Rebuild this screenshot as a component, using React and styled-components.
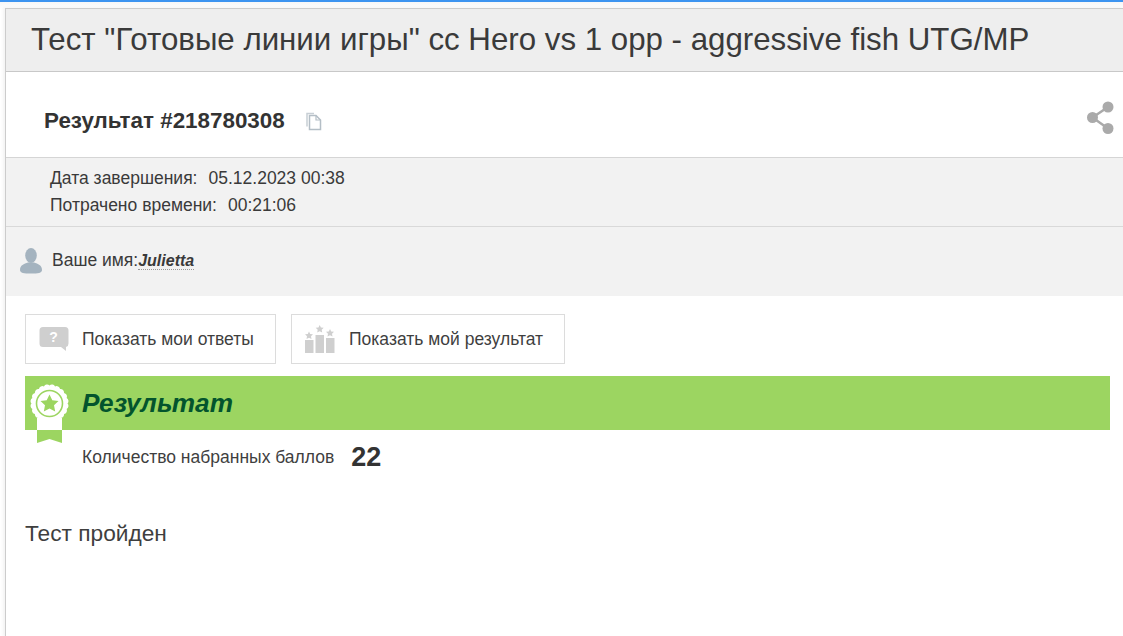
import React from 'react';
import styled, { createGlobalStyle } from 'styled-components';

const GlobalStyle = createGlobalStyle`
    html, body {
        margin: 0;
        padding: 0;
        height: 100%;
        background: #fff;
        overflow: hidden;
    }
    body {
        font-family: "Liberation Sans", Arial, sans-serif;
        color: #333;
    }
`;

const Page = styled.div`
    height: 636px;
    border-top: 2px solid #3d94f0;
    padding: 6px 0 0 5px;
    box-sizing: border-box;
    background: linear-gradient(#f7f7f7, #fff 8px);
`;

const Panel = styled.div`
    height: 100%;
    background: #fff;
    border-left: 1px solid #ccc;
    border-top: 1px solid #ccc;
    box-shadow: -2px 0 3px rgba(0, 0, 0, 0.05);
`;

const TitleBar = styled.div`
    height: 63px;
    box-sizing: border-box;
    background: #eee;
    border-bottom: 1px solid #c8c8c8;
    padding-left: 25px;
    display: flex;
    align-items: center;
`;

const Title = styled.h1`
    margin: 0;
    font-size: 31.25px;
    font-weight: 400;
    color: #3a3a3a;
    white-space: nowrap;
`;

const ResultHead = styled.div`
    height: 86px;
    box-sizing: border-box;
    padding: 12px 7px 0 38px;
    border-bottom: 1px solid #d5d5d5;
    display: flex;
    align-items: center;
`;

const ResultNumber = styled.span`
    font-size: 22.4px;
    font-weight: 700;
    color: #333;
`;

const CopyIcon = styled.svg`
    width: 18px;
    height: 19px;
    margin: 2px 0 0 20px;
`;

const ShareIcon = styled.svg`
    width: 30px;
    height: 34px;
    margin-left: auto;
    margin-top: -8px;
`;

const InfoBlock = styled.div`
    background: #f2f2f2;
    border-bottom: 1px solid #d9d9d9;
    height: 69px;
    box-sizing: border-box;
    padding: 7px 0 0 44px;
    font-size: 17.5px;
    line-height: 27px;
    color: #3a3a3a;
`;

const InfoValue = styled.span`
    margin-left: 11px;
`;

const NameBlock = styled.div`
    background: #f2f2f2;
    height: 69px;
    box-sizing: border-box;
    padding: 0 0 2px 14px;
    display: flex;
    align-items: center;
    font-size: 17.5px;
    color: #3a3a3a;
`;

const UserIcon = styled.svg`
    width: 22px;
    height: 26px;
    margin-right: 10px;
`;

const UserName = styled.span`
    font-size: 16px;
    font-weight: 700;
    font-style: italic;
    border-bottom: 1px dotted #999;
    line-height: 17px;
`;

const Content = styled.div`
    padding: 18px 13px 0 19px;
`;

const Buttons = styled.div`
    display: flex;
    gap: 15px;
`;

const ActionButton = styled.div`
    width: ${(p) => p.$width}px;
    height: 50px;
    box-sizing: border-box;
    border: 1px solid #dcdcdc;
    background: #fff;
    display: flex;
    align-items: center;
    padding-left: 13px;
    font-size: 17.5px;
    color: #3f3f3f;
`;

const ButtonIcon = styled.svg`
    width: 30px;
    height: 28px;
    margin-right: ${(p) => p.$gap}px;
    flex-shrink: 0;
`;

const ResultBar = styled.div`
    position: relative;
    height: 54px;
    margin-top: 12px;
    background: #9cd561;
    display: flex;
    align-items: center;
    padding-left: 57px;
`;

const ResultTitle = styled.h2`
    margin: 0;
    font-size: 26.2px;
    font-weight: 700;
    font-style: italic;
    color: #03542d;
`;

const Badge = styled.svg`
    position: absolute;
    left: 5px;
    top: 8px;
    width: 40px;
    height: 60px;
`;

const ScoreRow = styled.div`
    display: flex;
    align-items: center;
    height: 54px;
    padding-left: 57px;
    font-size: 17.5px;
    color: #3f3f3f;
`;

const ScoreValue = styled.span`
    margin-left: 17px;
    font-size: 27px;
    font-weight: 700;
    color: #333;
`;

const Passed = styled.div`
    margin-top: 36px;
    font-size: 22.7px;
    color: #3f3f3f;
`;

// scalloped rosette outline round the medal
const scallop = (cx, cy, r, n) => {
    let d = `M${cx + r} ${cy}`;
    for (let i = 1; i <= n; i++) {
        const a = (i / n) * Math.PI * 2;
        d += `A3.6 3.6 0 0 1 ${(cx + r * Math.cos(a)).toFixed(2)} ${(cy + r * Math.sin(a)).toFixed(2)}`;
    }
    return d + 'z';
};

export default function App() {
    return (
        <Page>
            <GlobalStyle />
            <Panel>
                <TitleBar>
                    <Title>Тест "Готовые линии игры" cc Hero vs 1 opp - aggressive fish UTG/MP</Title>
                </TitleBar>
                <ResultHead>
                    <ResultNumber>Результат #218780308</ResultNumber>
                    <CopyIcon viewBox="0 0 18 19">
                        <path d="M4.5 3.5H11l4.5 4.5v9.5h-11z" fill="#fff" stroke="#b4bec6" strokeWidth="1.5" />
                        <path d="M2 14.5V1.5h7" fill="none" stroke="#c8cfd5" strokeWidth="1.5" />
                        <path d="M11 3.5V8h4.5" fill="none" stroke="#b4bec6" strokeWidth="1.2" />
                    </CopyIcon>
                    <ShareIcon viewBox="0 0 30 34">
                        <path d="M6.500 17.500L22 7M6.500 17.500L22 28.500" stroke="#aaa" strokeWidth="2.5" fill="none" />
                        <circle cx="22" cy="7" r="5.5" fill="#aaa" />
                        <circle cx="6.500" cy="17.500" r="5.5" fill="#aaa" />
                        <circle cx="22" cy="28.500" r="5.5" fill="#aaa" />
                    </ShareIcon>
                </ResultHead>
                <InfoBlock>
                    <div>Дата завершения:<InfoValue>05.12.2023 00:38</InfoValue></div>
                    <div>Потрачено времени:<InfoValue>00:21:06</InfoValue></div>
                </InfoBlock>
                <NameBlock>
                    <UserIcon viewBox="0 0 22 26">
                        <ellipse cx="11" cy="7.500" rx="5.800" ry="7.500" fill="#a4b3bf" />
                        <path d="M0 22c0-5 4-6 8-7.500h6c4 1.500 8 2.500 8 7.500 0 3-4 3.500-11 3.500S0 25 0 22z" fill="#a4b3bf" />
                    </UserIcon>
                    Ваше имя:<UserName>Julietta</UserName>
                </NameBlock>
                <Content>
                    <Buttons>
                        <ActionButton $width={251}>
                            <ButtonIcon $gap={13} viewBox="0 0 30 28">
                                <path d="M4 2h22a3.500 3.500 0 0 1 3.500 3.500v13A3.500 3.500 0 0 1 27 22v4l-5-4H4a3.500 3.500 0 0 1-3.500-3.500v-13A3.500 3.500 0 0 1 4 2z" fill="#cfcfcf" />
                                <text x="14.500" y="17" fontSize="14" fontWeight="700" textAnchor="middle" fill="#fff" fontFamily="Liberation Sans">?</text>
                            </ButtonIcon>
                            Показать мои ответы
                        </ActionButton>
                        <ActionButton $width={274}>
                            <ButtonIcon $gap={14} viewBox="0 0 30 28">
                                <rect x="0" y="15" width="8.500" height="13" fill="#cfcfcf" />
                                <rect x="10.500" y="10" width="8.500" height="18" fill="#cfcfcf" />
                                <rect x="21" y="13" width="8.500" height="15" fill="#cfcfcf" />
                                <path d="M4 6.500l1.200 2.500 2.800.3-2 1.900.5 2.800L4 12.700l-2.500 1.300.5-2.800-2-1.900 2.800-.3z" fill="#cfcfcf" />
                                <path d="M14.700 0l1.200 2.500 2.800.3-2 1.900.5 2.800-2.500-1.300-2.500 1.300.5-2.800-2-1.900 2.800-.3z" fill="#cfcfcf" />
                                <path d="M25 4l1.200 2.500 2.800.3-2 1.900.5 2.800L25 10.200l-2.500 1.300.5-2.800-2-1.900 2.800-.3z" fill="#cfcfcf" />
                            </ButtonIcon>
                            Показать мой результат
                        </ActionButton>
                    </Buttons>
                    <ResultBar>
                        <Badge viewBox="0 0 40 60">
                            <rect x="7" y="34" width="25" height="12" fill="#fff" />
                            <path d="M7 46v13l12.500-4 12.500 4V46z" fill="#9cd561" />
                            <path d={scallop(19.500, 19.500, 18, 20)} fill="#fff" />
                            <circle cx="19.500" cy="19.500" r="13" fill="none" stroke="#9cd561" strokeWidth="1.600" />
                            <path d="M19.500 10.500l2.800 5.700 6.200.8-4.500 4.300 1.200 6.200-5.700-3-5.700 3 1.200-6.200-4.500-4.300 6.200-.8z" fill="#9cd561" />
                        </Badge>
                        <ResultTitle>Результат</ResultTitle>
                    </ResultBar>
                    <ScoreRow>
                        Количество набранных баллов
                        <ScoreValue>22</ScoreValue>
                    </ScoreRow>
                    <Passed>Тест пройден</Passed>
                </Content>
            </Panel>
        </Page>
    );
}
